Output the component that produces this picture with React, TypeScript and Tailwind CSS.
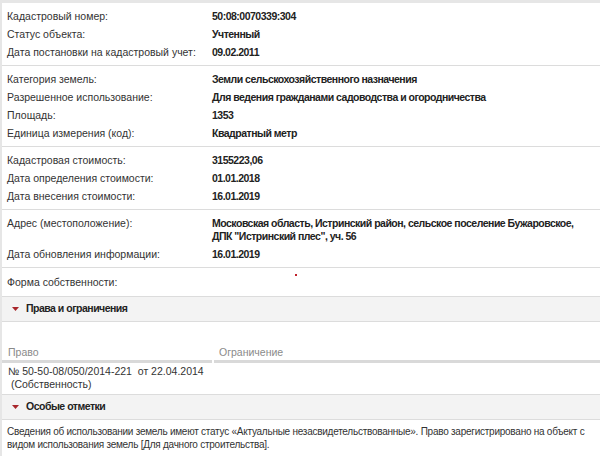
import React from "react";

type Row = { label: string; value: React.ReactNode };

const groups: Row[][] = [
  [
    { label: "Кадастровый номер:", value: "50:08:0070339:304" },
    { label: "Статус объекта:", value: "Учтенный" },
    { label: "Дата постановки на кадастровый учет:", value: "09.02.2011" },
  ],
  [
    { label: "Категория земель:", value: "Земли сельскохозяйственного назначения" },
    { label: "Разрешенное использование:", value: "Для ведения гражданами садоводства и огородничества" },
    { label: "Площадь:", value: "1353" },
    { label: "Единица измерения (код):", value: "Квадратный метр" },
  ],
  [
    { label: "Кадастровая стоимость:", value: "3155223,06" },
    { label: "Дата определения стоимости:", value: "01.01.2018" },
    { label: "Дата внесения стоимости:", value: "16.01.2019" },
  ],
  [
    {
      label: "Адрес (местоположение):",
      value: (
        <>
          Московская область, Истринский район, сельское поселение Бужаровское,
          <br />
          ДПК "Истринский плес", уч. 56
        </>
      ),
    },
    { label: "Дата обновления информации:", value: "16.01.2019" },
  ],
];

function Triangle() {
  return (
    <svg width="7" height="4" viewBox="0 0 7 4" className="mr-[7px]">
      <polygon points="0,0 7,0 3.5,4" fill="#a8262b" />
    </svg>
  );
}

function SectionHeader({ title }: { title: string }) {
  return (
    <div className="flex items-center h-[25px] bg-[#f3f3f3] border-b border-[#dcdcdc] pl-[10px] text-[10.5px] font-bold text-[#222] tracking-[-0.5px]">
      <Triangle />
      {title}
    </div>
  );
}

export default function App() {
  return (
    <div
      className="w-[600px] h-[456px] overflow-hidden bg-white border-t-[3px] border-l-2 border-[#e6e6e6] text-[10.5px] text-[#333]"
      style={{ fontFamily: '"Liberation Sans", Arial, sans-serif' }}
    >
      {groups.map((g, i) => (
        <div key={i} className="pt-[4px] pb-[4px] border-b border-[#dcdcdc]">
          {g.map((r, j) => (
            <div key={j} className="flex leading-[13px] pt-[3px] pb-[2px]">
              <div className="w-[210px] pl-[5px] shrink-0">{r.label}</div>
              <div className="font-bold text-[#222] tracking-[-0.5px] whitespace-nowrap">{r.value}</div>
            </div>
          ))}
        </div>
      ))}
      <div className="relative h-[29px] flex items-center pl-[5px] border-b border-[#dcdcdc] leading-[13px]">
        Форма собственности:
        <span className="absolute left-[293px] top-[6px] w-[2px] h-[2px] bg-[#c0202a]" />
      </div>
      <SectionHeader title="Права и ограничения" />
      <div className="flex items-end h-[38px] pb-[1px] text-[#8a8a8a] leading-[13px]">
        <div className="w-[211px] pl-[6px]">Право</div>
        <div className="pl-[6px]">Ограничение</div>
      </div>
      <div className="flex h-[3px]">
        <div className="w-[210px] bg-[#d9d9d9]" />
        <div className="w-[2px]" />
        <div className="flex-1 bg-[#d9d9d9]" />
      </div>
      <div className="pl-[6px] pt-[2px] pb-[3px] leading-[13px] border-b border-[#dcdcdc]">
        <div>№ 50-50-08/050/2014-221&nbsp; от 22.04.2014</div>
        <div>&nbsp;(Собственность)</div>
      </div>
      <SectionHeader title="Особые отметки" />
      <div className="pl-[5px] pt-[5px] pb-[6px] leading-[13px] border-b border-[#dcdcdc] whitespace-nowrap text-[10px] tracking-[-0.25px]">
        Сведения об использовании земель имеют статус «Актуальные незасвидетельствованные». Право зарегистрировано на объект с
        <br />
        видом использования земель [Для дачного строительства].
      </div>
    </div>
  );
}
